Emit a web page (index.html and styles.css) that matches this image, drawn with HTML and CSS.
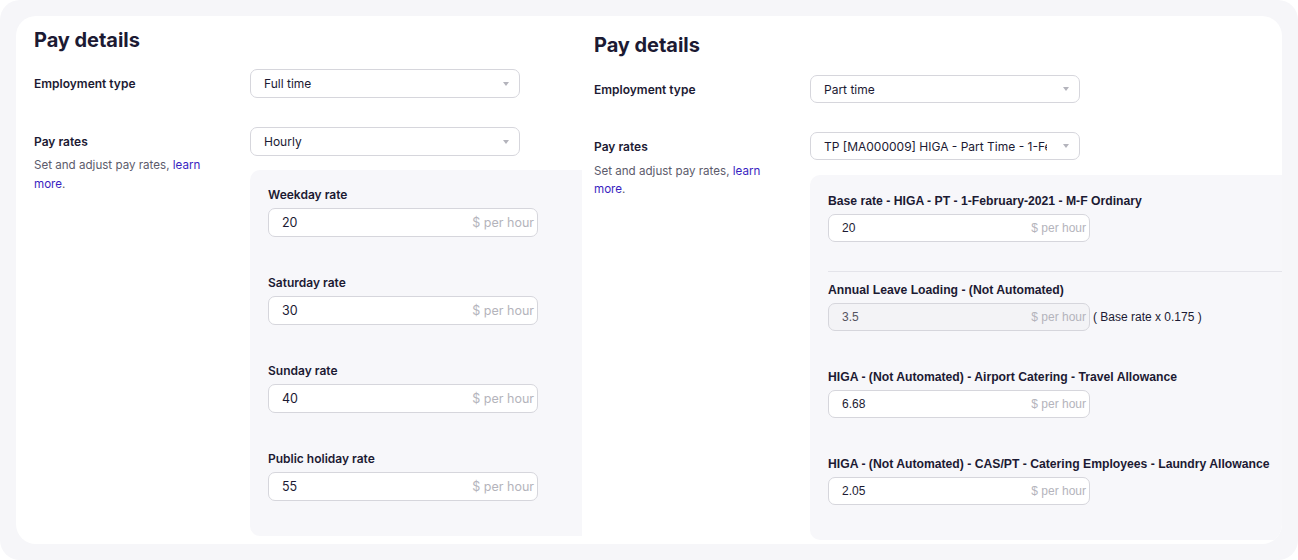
FILE: index.html
```html
<!DOCTYPE html>
<html lang="en">
<head>
<meta charset="utf-8">
<title>Pay details</title>
<link rel="stylesheet" href="styles.css">
</head>
<body>
<div class="frame">
  <div class="card">
    <section class="pane pane-left">
      <h2 class="title">Pay details</h2>
      <div class="row">
        <div class="label-col"><div class="label">Employment type</div></div>
        <div class="field-col">
          <div class="select"><span class="select-text">Full time</span><span class="caret"></span></div>
        </div>
      </div>
      <div class="row row-rates">
        <div class="label-col">
          <div class="label">Pay rates</div>
          <p class="desc">Set and adjust pay rates, <a class="link" href="#">learn more</a>.</p>
        </div>
        <div class="field-col">
          <div class="select"><span class="select-text">Hourly</span><span class="caret"></span></div>
          <div class="panel">
            <div class="field">
              <div class="field-label">Weekday rate</div>
              <div class="input"><span class="value">20</span><span class="unit">$ per hour</span></div>
            </div>
            <div class="field">
              <div class="field-label">Saturday rate</div>
              <div class="input"><span class="value">30</span><span class="unit">$ per hour</span></div>
            </div>
            <div class="field">
              <div class="field-label">Sunday rate</div>
              <div class="input"><span class="value">40</span><span class="unit">$ per hour</span></div>
            </div>
            <div class="field">
              <div class="field-label">Public holiday rate</div>
              <div class="input"><span class="value">55</span><span class="unit">$ per hour</span></div>
            </div>
          </div>
        </div>
      </div>
    </section>

    <section class="pane pane-right">
      <h2 class="title">Pay details</h2>
      <div class="row">
        <div class="label-col"><div class="label">Employment type</div></div>
        <div class="field-col">
          <div class="select"><span class="select-text">Part time</span><span class="caret"></span></div>
        </div>
      </div>
      <div class="row row-rates">
        <div class="label-col">
          <div class="label">Pay rates</div>
          <p class="desc">Set and adjust pay rates, <a class="link" href="#">learn more</a>.</p>
        </div>
        <div class="field-col">
          <div class="select select-clip"><span class="select-text">TP [MA000009] HIGA - Part Time - 1-February-2021</span><span class="caret"></span></div>
          <div class="panel">
            <div class="field field-sep">
              <div class="field-label">Base rate - HIGA - PT - 1-February-2021 - M-F Ordinary</div>
              <div class="input"><span class="value">20</span><span class="unit">$ per hour</span></div>
            </div>
            <div class="field">
              <div class="field-label">Annual Leave Loading - (Not Automated)</div>
              <div class="input-line">
                <div class="input input-disabled"><span class="value">3.5</span><span class="unit">$ per hour</span></div>
                <span class="formula">( Base rate x 0.175 )</span>
              </div>
            </div>
            <div class="field">
              <div class="field-label">HIGA - (Not Automated) - Airport Catering - Travel Allowance</div>
              <div class="input"><span class="value">6.68</span><span class="unit">$ per hour</span></div>
            </div>
            <div class="field">
              <div class="field-label">HIGA - (Not Automated) - CAS/PT - Catering Employees - Laundry Allowance</div>
              <div class="input"><span class="value">2.05</span><span class="unit">$ per hour</span></div>
            </div>
          </div>
        </div>
      </div>
    </section>
  </div>
</div>
</body>
</html>
```

FILE: styles.css
```css
* { box-sizing: border-box; }

html, body {
  margin: 0;
  padding: 0;
  background: #ffffff;
}

body {
  font-family: Inter, "Liberation Sans", Arial, sans-serif;
  color: #1c1a33;
}

.frame {
  width: 1298px;
  height: 560px;
  background: #f6f6f9;
  border-radius: 20px;
  padding: 16px;
}

.card {
  width: 1266px;
  height: 528px;
  background: #ffffff;
  border-radius: 20px;
  overflow: hidden;
  display: flex;
}

.pane {
  display: flex;
  flex-direction: column;
}

.pane-left {
  width: 566px;
  padding: 10px 0 0 18px;
}

.pane-right {
  flex: 1;
  padding: 15px 0 0 12px;
}

.title {
  margin: 0;
  font-size: 20px;
  line-height: 28px;
  font-weight: 700;
  color: #1c1a33;
  letter-spacing: -0.05px;
}

.row {
  display: flex;
  margin-top: 15px;
}

.pane-right .row { margin-top: 16px; }

.row-rates { margin-top: 29px; }
.pane-right .row-rates { margin-top: 29px; }

.label-col {
  width: 216px;
  flex: none;
}

.field-col {
  flex: 1;
  display: flex;
  flex-direction: column;
  min-width: 0;
}

.label {
  font-size: 12px;
  font-weight: 600;
  line-height: 28px;
  padding-top: 1px;
  color: #1c1a33;
}

.pane-right .label { line-height: 26px; padding-top: 2px; }

.desc {
  margin: 0;
  font-size: 11.6px;
  line-height: 19px;
  color: #5c5b6b;
  width: 180px;
}

.pane-right .desc { line-height: 18px; margin-top: 2px; }

.link {
  color: #3a1fc1;
  text-decoration: none;
}

.select {
  width: 270px;
  height: 29px;
  border: 1px solid #d6d6dc;
  border-radius: 7px;
  background: #ffffff;
  display: flex;
  align-items: center;
  padding: 0 10px 0 13px;
  gap: 8px;
}

.pane-right .select { height: 28px; }

.select-clip { gap: 16px; }

.select-text {
  flex: 1;
  min-width: 0;
  font-size: 12px;
  color: #1c1a33;
  white-space: nowrap;
  overflow: hidden;
}

.caret {
  flex: none;
  width: 0;
  height: 0;
  border-left: 3px solid transparent;
  border-right: 3px solid transparent;
  border-top: 4px solid #b4b4bc;
}

.panel {
  margin-top: 14px;
  background: #f7f7fa;
  border-radius: 10px 0 0 10px;
  padding: 16px 0 35px 18px;
  display: flex;
  flex-direction: column;
  gap: 37px;
  flex: 1;
  margin-bottom: 8px;
}

.pane-right .panel {
  margin-top: 15px;
  padding: 17px 0 35px 18px;
  margin-bottom: 3px;
}

.field {
  display: flex;
  flex-direction: column;
  gap: 6px;
}

.field-label {
  font-size: 12px;
  font-weight: 600;
  line-height: 16px;
  padding-top: 1px;
  margin-bottom: -1px;
  color: #1c1a33;
  white-space: nowrap;
}

.pane-right .field-label {
  font-family: "Liberation Sans", Arial, sans-serif;
  font-weight: 700;
  font-size: 12.2px;
}

.field-sep {
  border-bottom: 1px solid #e4e4ea;
  padding-bottom: 29px;
  margin-bottom: -28px;
}

.input {
  width: 270px;
  height: 29px;
  border: 1px solid #d6d6dc;
  border-radius: 7px;
  background: #ffffff;
  display: flex;
  align-items: center;
  justify-content: space-between;
  padding: 0 3px 0 13px;
}

.pane-right .input {
  width: 262px;
  height: 28px;
  font-family: "Liberation Sans", Arial, sans-serif;
}

.value {
  font-size: 12.5px;
  color: #1c1a33;
}

.pane-right .value { font-size: 12px; }

.unit {
  font-size: 12.5px;
  color: #b4b4bc;
}

.pane-right .unit { font-size: 12px; }

.input-line {
  display: flex;
  align-items: center;
  gap: 3px;
}

.input-disabled {
  background: #f3f3f6;
}

.input-disabled .value { color: #55545f; }

.formula {
  font-family: "Liberation Sans", Arial, sans-serif;
  font-size: 12px;
  color: #1c1a33;
}
```
